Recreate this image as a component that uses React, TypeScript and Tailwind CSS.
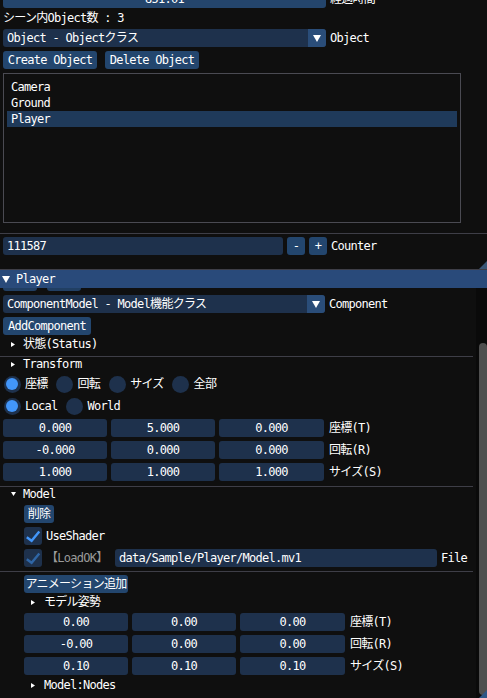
import React from 'react';

// ImGui dark theme colours blended over the window background
const frameBg = 'bg-[#1e314c]';
const buttonBg = 'bg-[#23466e]';

function DownTri({ w = 8, h = 7 }: { w?: number; h?: number }) {
  return (
    <svg width={w} height={h} viewBox={`0 0 ${w} ${h}`} className="shrink-0">
      <path d={`M0 0H${w}L${w / 2} ${h}Z`} fill="#ffffff" />
    </svg>
  );
}

function RightTri() {
  return (
    <svg width="4" height="5" viewBox="0 0 4 5" className="shrink-0">
      <path d="M0 0L4 2.5L0 5Z" fill="#ffffff" />
    </svg>
  );
}

function Field({ w, children, center = true }: { w: number; children: React.ReactNode; center?: boolean }) {
  return (
    <div
      style={{ width: w }}
      className={`h-[18px] shrink-0 rounded-[3px] ${frameBg} flex items-center ${center ? 'justify-center' : 'pl-[4px]'}`}
    >
      {children}
    </div>
  );
}

function Button({ w, children }: { w: number; children: React.ReactNode }) {
  return (
    <div style={{ width: w }} className={`h-[18px] shrink-0 rounded-[3px] ${buttonBg} flex items-center justify-center`}>
      {children}
    </div>
  );
}

function Combo({ w, text }: { w: number; text: string }) {
  return (
    <div style={{ width: w }} className={`h-[18px] shrink-0 rounded-[3px] ${frameBg} flex overflow-hidden`}>
      <div className="flex-1 flex items-center pl-[4px] whitespace-nowrap">{text}</div>
      <div className="w-[18px] bg-[#2a4d79] flex items-center justify-center">
        <DownTri w={8} h={7} />
      </div>
    </div>
  );
}

function Radio({ on, label }: { on?: boolean; label: string }) {
  return (
    <div className="flex items-center gap-[4px] h-[18px]">
      <div className="w-[18px] h-[18px] flex items-center justify-center">
        <div className={`w-[17px] h-[17px] rounded-full ${frameBg} flex items-center justify-center`}>
          {on && <div className="w-[12px] h-[12px] rounded-full bg-[#4296fa]" />}
        </div>
      </div>
      <span>{label}</span>
    </div>
  );
}

function Check({ dim }: { dim?: boolean }) {
  return (
    <div className={`w-[18px] h-[18px] shrink-0 rounded-[3px] ${frameBg}`}>
      <svg width="18" height="18" viewBox="0 0 18 18">
        <path
          d="M2.8 10.2L7.6 13.8L15.3 4.4"
          fill="none"
          stroke={dim ? '#2f66a6' : '#4296fa'}
          strokeWidth="2.4"
        />
      </svg>
    </div>
  );
}

function Vec3({ values, label, x, widths }: { values: string[]; label: string; x: number; widths: number[] }) {
  return (
    <div className="flex items-center h-[18px] gap-[4px]" style={{ marginLeft: x }}>
      {values.map((v, i) => (
        <Field key={i} w={widths[i]}>
          {v}
        </Field>
      ))}
      <span className="ml-[1px] whitespace-nowrap">{label}</span>
    </div>
  );
}

const Separator = () => <div className="h-px w-[473px] bg-[#3e3e47] shrink-0" />;

export default function App() {
  return (
    <div className="w-[487px] h-[698px] overflow-hidden bg-[#0f0f0f] text-white text-[12px] leading-[12px] tracking-[-0.72px] font-['DejaVu_Sans_Mono','Noto_Sans_CJK_JP',monospace] flex flex-col">
      {/* upper window */}
      <div className="relative h-[270px] shrink-0 border-b border-[#3e3e47] flex flex-col">
        <div className="flex items-center mt-[-10px] ml-[3px] h-[18px]">
          <div className="w-[323px] h-[18px] rounded-[3px] bg-[#24456c] flex items-center justify-center">851.01</div>
          <span className="ml-[4px]">経過時間</span>
        </div>

        <div className="mt-[4px] ml-[3px] h-[12px] flex items-center whitespace-nowrap">シーン内Object数 : 3</div>

        <div className="mt-[5px] ml-[3px] flex items-center">
          <Combo w={323} text="Object - Objectクラス" />
          <span className="ml-[4px]">Object</span>
        </div>

        <div className="mt-[4px] ml-[3px] flex items-center gap-[8px]">
          <Button w={94}>Create Object</Button>
          <Button w={94}>Delete Object</Button>
        </div>

        <div className="mt-[4px] ml-[3px] w-[458px] h-[150px] border border-[#4a4a52] px-[3px] pt-[5px] flex flex-col">
          {['Camera', 'Ground', 'Player'].map((n) => (
            <div key={n} className={`h-[16px] flex items-center pl-[4px] ${n === 'Player' ? 'bg-[#1f3a5a]' : ''}`}>
              {n}
            </div>
          ))}
        </div>

        <div className="mt-[10px] h-px w-full bg-[#3e3e47]" />

        <div className="mt-[3px] ml-[3px] flex items-center">
          <Field w={280} center={false}>111587</Field>
          <div className="ml-[4px]">
            <Button w={18}>-</Button>
          </div>
          <div className="ml-[4px]">
            <Button w={18}>+</Button>
          </div>
          <span className="ml-[4px]">Counter</span>
        </div>

        <svg width="8" height="8" viewBox="0 0 8 8" className="absolute right-0 bottom-0">
          <path d="M8 0V8H0Z" fill="#3a5676" />
        </svg>
      </div>

      {/* Player window */}
      <div className="relative flex-1 min-h-0 flex flex-col">
        <div className="h-[18px] shrink-0 bg-[#294a7a] flex items-center">
          <div className="ml-[2px]">
            <DownTri w={8} h={7} />
          </div>
          <span className="ml-[6px]">Player</span>
        </div>

        <div className="flex flex-1 min-h-0">
          <div className="flex-1 flex flex-col overflow-hidden">
            <div className="flex h-[3px] ml-[3px] gap-[10px]">
              <div className="w-[34px] rounded-b-[3px] bg-[#213f63]" />
              <div className="w-[34px] rounded-b-[3px] bg-[#213f63]" />
            </div>

            <div className="mt-[4px] ml-[3px] flex items-center">
              <Combo w={322} text="ComponentModel - Model機能クラス" />
              <span className="ml-[4px]">Component</span>
            </div>

            <div className="mt-[4px] ml-[3px]">
              <Button w={88}>AddComponent</Button>
            </div>

            <div className="mt-[3px] h-[12px] flex items-center">
              <div className="ml-[11px]">
                <RightTri />
              </div>
              <span className="ml-[8px]">状態(Status)</span>
            </div>

            <div className="mt-[6px]">
              <Separator />
            </div>

            <div className="mt-[1px] h-[12px] flex items-center">
              <div className="ml-[11px]">
                <RightTri />
              </div>
              <span className="ml-[8px]">Transform</span>
            </div>

            <div className="mt-[5px] ml-[3px] flex items-center gap-[8px]">
              <Radio on label="座標" />
              <Radio label="回転" />
              <Radio label="サイズ" />
              <Radio label="全部" />
            </div>

            <div className="mt-[4px] ml-[3px] flex items-center gap-[8px]">
              <Radio on label="Local" />
              <Radio label="World" />
            </div>

            <div className="mt-[4px]">
              <Vec3 x={3} widths={[104, 104, 105]} values={['0.000', '5.000', '0.000']} label="座標(T)" />
            </div>
            <div className="mt-[4px]">
              <Vec3 x={3} widths={[104, 104, 105]} values={['-0.000', '0.000', '0.000']} label="回転(R)" />
            </div>
            <div className="mt-[4px]">
              <Vec3 x={3} widths={[104, 104, 105]} values={['1.000', '1.000', '1.000']} label="サイズ(S)" />
            </div>

            <div className="mt-[5px]">
              <Separator />
            </div>

            <div className="mt-[1px] h-[12px] flex items-center">
              <div className="ml-[11px]">
                <DownTri w={5} h={4} />
              </div>
              <span className="ml-[7px]">Model</span>
            </div>

            <div className="mt-[5px] ml-[24px]">
              <Button w={30}>削除</Button>
            </div>

            <div className="mt-[4px] ml-[24px] flex items-center h-[18px]">
              <Check />
              <span className="ml-[4px]">UseShader</span>
            </div>

            <div className="mt-[4px] ml-[24px] flex items-center h-[18px]">
              <Check dim />
              <span className="ml-[4px] w-[69px] shrink-0 text-[#9a9a9a] whitespace-nowrap">【LoadOK】</span>
              <Field w={322} center={false}>
                data/Sample/Player/Model.mv1
              </Field>
              <span className="ml-[4px]">File</span>
            </div>

            <div className="mt-[4px]">
              <Separator />
            </div>

            <div className="mt-[3px] ml-[24px]">
              <Button w={104}>アニメーション追加</Button>
            </div>

            <div className="mt-[3px] h-[12px] flex items-center">
              <div className="ml-[31px]">
                <RightTri />
              </div>
              <span className="ml-[9px]">モデル姿勢</span>
            </div>

            <div className="mt-[5px]">
              <Vec3 x={24} widths={[104, 104, 105]} values={['0.00', '0.00', '0.00']} label="座標(T)" />
            </div>
            <div className="mt-[4px]">
              <Vec3 x={24} widths={[104, 104, 105]} values={['-0.00', '0.00', '0.00']} label="回転(R)" />
            </div>
            <div className="mt-[4px]">
              <Vec3 x={24} widths={[104, 104, 105]} values={['0.10', '0.10', '0.10']} label="サイズ(S)" />
            </div>

            <div className="mt-[4px] h-[12px] flex items-center">
              <div className="ml-[31px]">
                <RightTri />
              </div>
              <span className="ml-[9px]">Model:Nodes</span>
            </div>
          </div>

          <div className="w-[11px] shrink-0 bg-[#0a0a0a]">
            <div className="mt-[55px] ml-[3px] w-[8px] h-[352px] rounded-[4px] bg-[#4f4f4f]" />
          </div>
        </div>

        <svg width="8" height="8" viewBox="0 0 8 8" className="absolute right-0 bottom-0">
          <path d="M8 0V8H0Z" fill="#2f5787" />
        </svg>
      </div>
    </div>
  );
}
